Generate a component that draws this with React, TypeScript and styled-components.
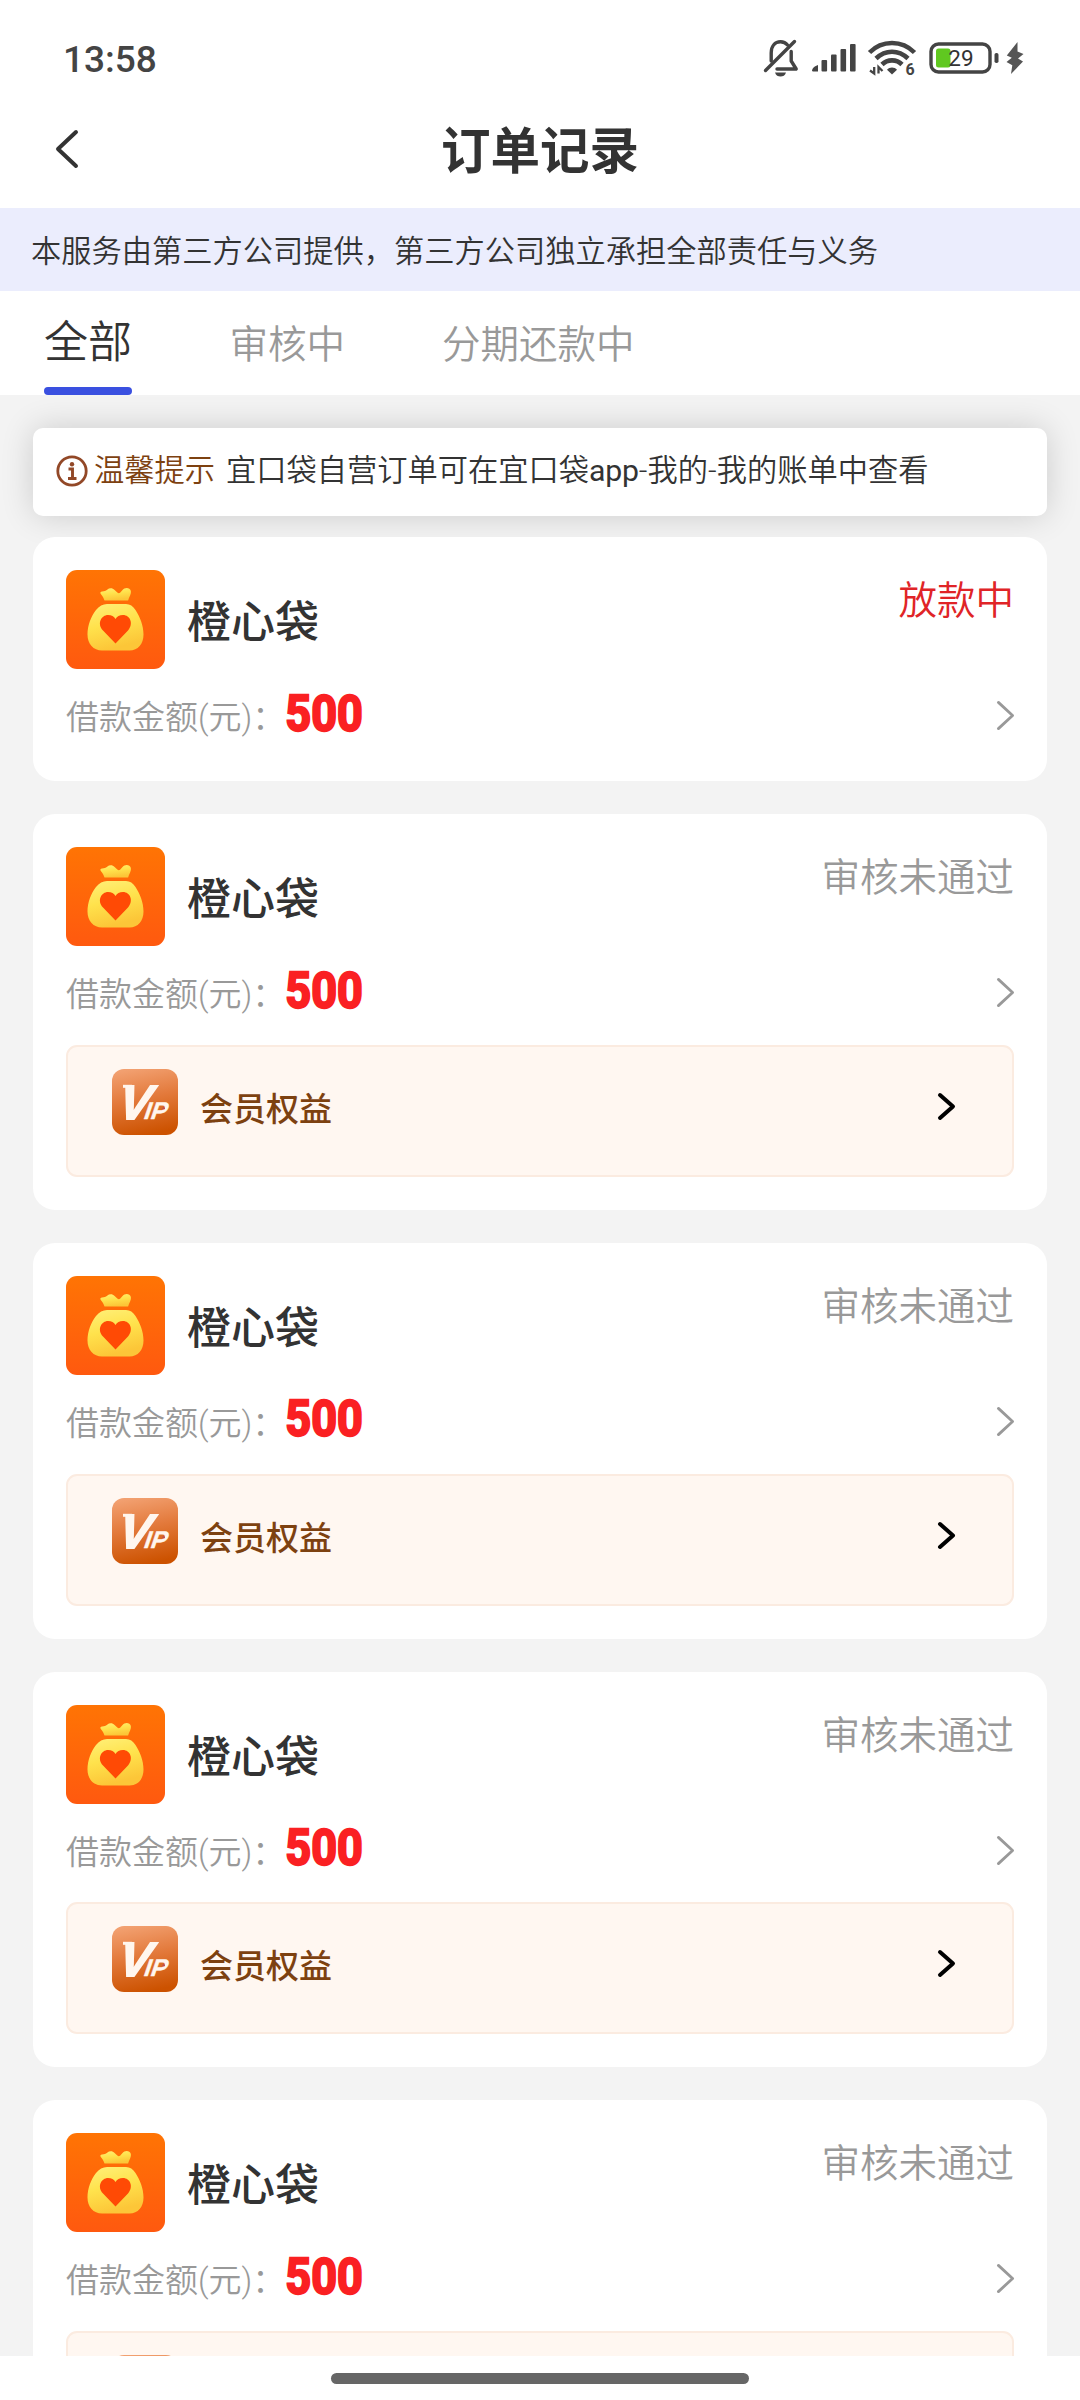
import React from "react";
import styled, { createGlobalStyle } from "styled-components";

const GlobalStyle = createGlobalStyle`
  * { box-sizing: border-box; }
  body { margin: 0; background: #ffffff; }
`;

const Screen = styled.div`
  width: 1080px;
  height: 2400px;
  display: flex;
  flex-direction: column;
  overflow: hidden;
  background: #f3f3f3;
  color: #333333;
  font-family: Roboto, "Noto Sans CJK SC", sans-serif;
  font-weight: 350;
  svg { display: block; flex: none; overflow: visible; }
`;

const StatusBar = styled.div`
  height: 96px;
  flex: none;
  display: flex;
  align-items: center;
  justify-content: space-between;
  padding: 20px 56px 0 63px;
  background: #ffffff;
`;

const Clock = styled.span`
  padding-top: 3px;
  font-size: 37px;
  line-height: 44px;
  font-weight: 500;
  color: #444444;
`;

const StatusIcons = styled.div`
  display: flex;
  align-items: center;
  height: 44px;
`;

const TitleBar = styled.header`
  height: 112px;
  flex: none;
  display: grid;
  grid-template-columns: 132px 1fr 132px;
  align-items: center;
  background: #ffffff;
  padding-bottom: 7px;
`;

const BackButton = styled.button`
  border: 0;
  background: none;
  padding: 0 0 0 56px;
  color: #333333;
`;

const Title = styled.h1`
  margin: 0;
  padding-top: 7px;
  text-align: center;
  font-size: 49.5px;
  line-height: 72px;
  font-weight: 700;
`;

const Disclaimer = styled.div`
  height: 83px;
  flex: none;
  padding-left: 31px;
  background: #ebedfd;
  font-size: 30.25px;
  line-height: 87px;
  white-space: nowrap;
`;

const Tabs = styled.nav`
  height: 104px;
  flex: none;
  display: flex;
  padding-left: 44px;
  background: #ffffff;
`;

const Tab = styled.div<{ $active?: boolean }>`
  display: flex;
  flex-direction: column;
  margin-right: ${(p) => (p.$active ? 97.5 : 97)}px;
  font-size: ${(p) => (p.$active ? 44 : 38.5)}px;
  line-height: ${(p) => (p.$active ? 104 : 107)}px;
  color: ${(p) => (p.$active ? "#333333" : "#999999")};
  height: 104px;
  &::after {
    content: "";
    flex: none;
    height: 8px;
    margin-top: -8px;
    border-radius: 4px;
    background: ${(p) => (p.$active ? "#3a50e0" : "transparent")};
  }
`;

const TabLabel = styled.span`
  height: 104px;
  flex: none;
`;

const Content = styled.main`
  flex: 1;
  min-height: 0;
  overflow: hidden;
  padding: 33px 33px 0;
`;

const Tip = styled.div`
  height: 88px;
  display: flex;
  align-items: center;
  padding: 0 23px 3px;
  border-radius: 10px;
  background: #ffffff;
  box-shadow: 0 0 33px rgba(0, 0, 0, 0.16);
  font-size: 30.25px;
  line-height: 44px;
  white-space: nowrap;
`;

const TipLabel = styled.span`
  margin: 0 11px 0 6px;
  color: #7d4110;
`;

const Latin = styled.span`
  font-weight: 400;
  letter-spacing: -0.2px;
`;

const OrderList = styled.div`
  position: relative;
  display: flex;
  flex-direction: column;
  gap: 33px;
  margin-top: 21px;
`;

const Card = styled.article`
  flex: none;
  padding: 33px;
  border-radius: 22px;
  background: #ffffff;
`;

const CardHead = styled.div`
  height: 99px;
  display: flex;
  align-items: center;
`;

const Merchant = styled.span`
  margin-left: 22px;
  padding-top: 7px;
  flex: 1;
  font-size: 44px;
  line-height: 64px;
  font-weight: 500;
`;

const State = styled.span<{ $alert?: boolean }>`
  align-self: flex-start;
  font-size: 38.5px;
  line-height: 62px;
  color: ${(p) => (p.$alert ? "#e02427" : "#999999")};
`;

const AmountRow = styled.div`
  height: 79px;
  padding-top: 14px;
  display: flex;
  align-items: center;
  font-size: 33px;
  line-height: 64px;
  color: #999999;
`;

const AmountLabel = styled.span`
  padding-top: 5px;
`;

const Amount = styled.strong`
  flex: 1;
  padding-bottom: 4px;
  font-size: 45px;
  font-weight: 700;
  color: #fa2022;
  -webkit-text-stroke: 2px #fa2022;
  transform: scaleY(1.13);
`;

const Benefit = styled.div`
  height: 132px;
  margin-top: 19.8px;
  display: flex;
  align-items: flex-start;
  padding: 22px 57px 0 44px;
  border: 2px solid #fbebe0;
  border-radius: 11px;
  background: #fff7f1;
`;

const BenefitName = styled.span`
  flex: 1;
  margin: 8px 0 0 22px;
  font-size: 33px;
  line-height: 66px;
  font-weight: 500;
  color: #7d4110;
`;

const BenefitArrow = styled.span`
  margin-top: 24px;
`;

const GestureArea = styled.footer`
  height: 44px;
  flex: none;
  display: flex;
  justify-content: center;
  padding-top: 17px;
  background: #ffffff;
`;

const GesturePill = styled.div`
  width: 418px;
  height: 11px;
  border-radius: 6px;
  background: #666666;
`;

const Gap = styled.span<{ $w: number }>`
  width: ${(p) => p.$w}px;
`;

const MutedBell = () => (
  <svg width="36" height="38" viewBox="0 0 36 38" fill="none" stroke="#444" strokeWidth="3.4" strokeLinecap="round" strokeLinejoin="round">
    <path d="M8.2 22V14C8.2 7 12 2.8 17.5 2.8c3 0 5.4 1.2 7 3.2" />
    <path d="M28.2 12.5V22l5 8H14" />
    <path d="M31.5 2.5L2.5 31.5" />
    <path d="M12 33.4h11c-1 3-3 4-5.500 4s-4.500-1-5.500-4z" fill="#444" stroke="none" />
  </svg>
);

const Signal = () => (
  <svg width="46" height="30" viewBox="0 0 46 30" fill="#444">
    <path d="M1 28c0-3 3-5 6-6v6.500H2z" />
    <rect x="10.500" y="17" width="5.600" height="11.500" rx="1" />
    <rect x="20" y="11.500" width="5.600" height="17" rx="1" />
    <rect x="29.500" y="6" width="5.600" height="22.500" rx="1" />
    <rect x="39" y="1" width="5.600" height="27.500" rx="1" />
  </svg>
);

const Wifi = () => (
  <svg width="48" height="44" viewBox="0 -4 48 44" fill="none" stroke="#444" strokeWidth="4.600">
    <path d="M1.500 12.500C14-.2 34-.2 46.500 12.500" />
    <path d="M8 18.500c9.500-9 22.500-9 32 0" />
    <path d="M14 24.500c5.500-5.500 14.500-5.500 20 0" />
    <path d="M24 34.500l-5-4.800c2.500-3 7.500-3 10 0z" fill="#444" stroke="none" />
    <path d="M6.200 27v6.500L2 30.500M10.500 33.500V27l4 4" strokeWidth="2.300" />
    <text x="37.500" y="35" fontFamily="Roboto, sans-serif" fontWeight="700" fontSize="16" fill="#444" stroke="none">6</text>
  </svg>
);

const Battery = () => (
  <svg width="70" height="32" viewBox="0 0 70 32">
    <rect x="7" y="6.500" width="14.500" height="19" rx="2.500" fill="#60c820" />
    <rect x="2" y="2" width="59" height="28" rx="7.500" fill="none" stroke="#444" strokeWidth="3.400" />
    <rect x="65.500" y="11" width="4" height="10" rx="1.800" fill="#444" />
    <text x="32" y="24" textAnchor="middle" fontFamily="Roboto, sans-serif" fontWeight="400" fontSize="22.500" fill="#333">29</text>
  </svg>
);

const Bolt = () => (
  <svg width="18" height="32" viewBox="0 0 18 32" fill="#555">
    <path d="M11.500 0L.8 13.500l5 2.200L.5 20l5.800 3.200L5 32l12-12.500-5-3 5.500-4.500-6-2.500z" />
  </svg>
);

const InfoIcon = () => (
  <svg width="32" height="32" viewBox="0 0 32 32" fill="none" stroke="#924827">
    <circle cx="16" cy="16" r="14.200" strokeWidth="2.800" />
    <circle cx="16" cy="9.200" r="2.200" fill="#924827" stroke="none" />
    <path d="M12.500 14h4v9M12 23.500h8.500" strokeWidth="2.900" />
  </svg>
);

const Chevron = ({ width, height, stroke, color, left }: { width: number; height: number; stroke: number; color: string; left?: boolean }) => {
  const e = stroke / 2;
  const tip = left ? e : width - e;
  const end = left ? width - e : e;
  return (
    <svg width={width} height={height} viewBox={`0 0 ${width} ${height}`} fill="none" stroke={color} strokeWidth={stroke} strokeLinecap="round" strokeLinejoin="round">
      <path d={`M${end} ${e}L${tip} ${height / 2}L${end} ${height - e}`} />
    </svg>
  );
};

const MoneyBag = () => (
  <svg width="99" height="99" viewBox="0 0 99 99">
    <defs>
      <linearGradient id="bagBg" x1="0" y1="0" x2="0" y2="1">
        <stop offset="0" stopColor="#ff7404" />
        <stop offset="1" stopColor="#ff590f" />
      </linearGradient>
      <linearGradient id="bagFill" x1="0" y1="0" x2="0.300" y2="1">
        <stop offset="0" stopColor="#fff07a" />
        <stop offset="0.500" stopColor="#ffe24c" />
        <stop offset="1" stopColor="#fcc638" />
      </linearGradient>
    </defs>
    <rect width="99" height="99" rx="11" fill="url(#bagBg)" />
    <path d="M38.500 30.500c-.8-2.700-2-4.500-3.700-6.500-1-1.300-.2-2.500 1.300-2.500 2.400 0 3.500-.5 5-1.700 2.500-2 5.200-2 7.500.2l2.700 2.500c1 .9 2 .9 3 0l2-2.200c2-2.600 5-3 7-1.500 2.200 1.600 2 4 .8 6.700-.7 1.600-1.600 3.300-2 5z" fill="url(#bagFill)" />
    <path d="M41 34h19c4 0 7 2.300 9.500 6 4.500 7 8 15.500 8 24.500 0 9.500-5.500 16-14 16H36c-8.500 0-14.500-6.500-14.500-16 0-9 3.500-18 8.500-24.500 3-4 7-6 11-6z" fill="url(#bagFill)" />
    <path d="M49.500 73.500L37 60.500c-6.500-7-1.500-15.500 5-15.500 3.500 0 6 1.300 7.500 4 1.500-2.700 4-4 7.500-4 7 0 11 8.500 5 15.500z" fill="#ff4a05" />
  </svg>
);

const VipBadge = () => (
  <svg width="66" height="66" viewBox="0 0 66 66" fontFamily="'Liberation Sans', sans-serif" fontWeight="700" fill="#fff6ee">
    <defs>
      <linearGradient id="vipBg" x1="0.300" y1="0" x2="0.500" y2="1">
        <stop offset="0" stopColor="#f2a070" />
        <stop offset="0.450" stopColor="#e37a3c" />
        <stop offset="1" stopColor="#cc5200" />
      </linearGradient>
    </defs>
    <rect width="66" height="66" rx="12" fill="url(#vipBg)" />
    <rect x="11" y="15.800" width="9" height="3" />
    <text transform="translate(2.500 50) skewX(-19)" fontSize="48" stroke="#fff6ee" strokeWidth="1.800">
      V<tspan dx="-4" fontSize="24" strokeWidth="0.400">IP</tspan>
    </text>
    <circle cx="51.700" cy="39.300" r="1.300" fill="#c0504a" />
  </svg>
);

type Order = { id: number; state: string; alert?: boolean; benefit?: boolean };

const orders: Order[] = [
  { id: 1, state: "放款中", alert: true },
  { id: 2, state: "审核未通过", benefit: true },
  { id: 3, state: "审核未通过", benefit: true },
  { id: 4, state: "审核未通过", benefit: true },
  { id: 5, state: "审核未通过", benefit: true },
];

const OrderCard = ({ order }: { order: Order }) => (
  <Card>
    <CardHead>
      <MoneyBag />
      <Merchant>橙心袋</Merchant>
      <State $alert={order.alert}>{order.state}</State>
    </CardHead>
    <AmountRow>
      <AmountLabel>借款金额(元)：</AmountLabel>
      <Amount>500</Amount>
      <Chevron width={17} height={29} stroke={2.8} color="#999999" />
    </AmountRow>
    {order.benefit && (
      <Benefit>
        <VipBadge />
        <BenefitName>会员权益</BenefitName>
        <BenefitArrow>
          <Chevron width={17} height={27} stroke={4} color="#000000" />
        </BenefitArrow>
      </Benefit>
    )}
  </Card>
);

export default function App() {
  return (
    <Screen lang="zh-CN">
      <GlobalStyle />
      <StatusBar>
        <Clock>13:58</Clock>
        <StatusIcons>
          <MutedBell />
          <Gap $w={12} />
          <Signal />
          <Gap $w={11} />
          <Wifi />
          <Gap $w={13} />
          <Battery />
          <Gap $w={7} />
          <Bolt />
        </StatusIcons>
      </StatusBar>
      <TitleBar>
        <BackButton aria-label="返回">
          <Chevron left width={22} height={38} stroke={4} color="#333333" />
        </BackButton>
        <Title>订单记录</Title>
      </TitleBar>
      <Disclaimer>本服务由第三方公司提供，第三方公司独立承担全部责任与义务</Disclaimer>
      <Tabs>
        <Tab $active><TabLabel>全部</TabLabel></Tab>
        <Tab><TabLabel>审核中</TabLabel></Tab>
        <Tab><TabLabel>分期还款中</TabLabel></Tab>
      </Tabs>
      <Content>
        <Tip>
          <InfoIcon />
          <TipLabel>温馨提示</TipLabel>
          <span>宜口袋自营订单可在宜口袋<Latin>app</Latin>-我的-我的账单中查看</span>
        </Tip>
        <OrderList>
          {orders.map((order) => (
            <OrderCard key={order.id} order={order} />
          ))}
        </OrderList>
      </Content>
      <GestureArea>
        <GesturePill />
      </GestureArea>
    </Screen>
  );
}
